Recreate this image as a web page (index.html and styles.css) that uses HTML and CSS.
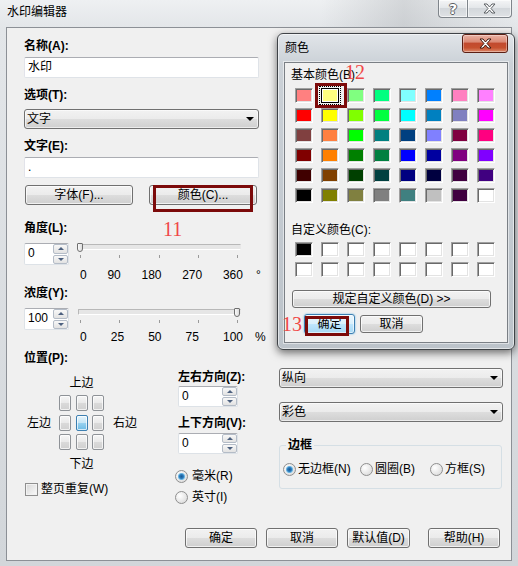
FILE: index.html
```html
<!DOCTYPE html>
<html lang="zh-CN">
<head>
<meta charset="utf-8">
<title>水印编辑器</title>
<link rel="stylesheet" href="styles.css">
</head>
<body>
<div class="window">
  <div class="titlebar">
    <span class="title">水印编辑器</span>
    <div class="caption">
      <span class="cap cap-help">?</span>
      <span class="cap cap-close"><svg width="13" height="11" viewBox="0 0 13 11"><path d="M1,1 h3 l2.5,3 l2.5,-3 h3 l-4,4.5 l4,4.5 h-3 l-2.5,-3 l-2.5,3 h-3 l4,-4.5 z" fill="#fff" stroke="#5b5f63" stroke-width="1" stroke-linejoin="round"/></svg></span>
    </div>
  </div>

  <div class="client">
    <div class="main">
      <div class="col-left">
        <div class="lbl">名称(A):</div>
        <div class="textbox tb-name">水印</div>
        <div class="lbl lbl-gap">选项(T):</div>
        <div class="combo combo-opt"><span>文字</span><span class="arrow"></span></div>
        <div class="lbl lbl-gap">文字(E):</div>
        <div class="textbox tb-text">.</div>
        <div class="btn-row">
          <div class="btn btn-font">字体(F)...</div>
          <div class="btn btn-color">颜色(C)...<span class="mark mark-color"></span></div>
        </div>

        <div class="lbl lbl-angle">角度(L):</div>
        <div class="slider-row">
          <div class="spin spin-s"><span class="spin-val">0</span><span class="spin-btns"><span class="sb"><i class="up"></i></span><span class="sb"><i class="down"></i></span></span></div>
          <div class="slider">
            <div class="track"><span class="thumb thumb-start"></span></div>
            <div class="ticks"><i></i><i></i><i></i><i></i><i></i></div>
            <div class="scale scale-a"><div class="nums"><span>0</span><span>90</span><span>180</span><span>270</span><span>360</span></div><span class="unit unit-deg">°</span></div>
          </div>
        </div>

        <div class="lbl lbl-dens">浓度(Y):</div>
        <div class="slider-row slider-row2">
          <div class="spin spin-s"><span class="spin-val">100</span><span class="spin-btns"><span class="sb"><i class="up"></i></span><span class="sb"><i class="down"></i></span></span></div>
          <div class="slider">
            <div class="track"><span class="thumb thumb-end"></span></div>
            <div class="ticks"><i></i><i></i><i></i><i></i><i></i></div>
            <div class="scale scale-b"><div class="nums"><span>0</span><span>25</span><span>50</span><span>75</span><span>100</span></div><span class="unit unit-pct">%</span></div>
          </div>
        </div>

        <div class="lbl lbl-pos">位置(P):</div>
        <div class="pos-row">
          <div class="pos-left">
            <div class="posgrid">
              <span class="pg-top">上边</span>
              <span class="pg-left">左边</span>
              <div class="cells">
                <span class="pc"></span><span class="pc"></span><span class="pc"></span>
                <span class="pc"></span><span class="pc on"></span><span class="pc"></span>
                <span class="pc"></span><span class="pc"></span><span class="pc"></span>
              </div>
              <span class="pg-right">右边</span>
              <span class="pg-bottom">下边</span>
            </div>
            <div class="check-row"><span class="chk"></span><span>整页重复(W)</span></div>
          </div>
          <div class="pos-right">
            <div class="lbl pr-l1">左右方向(Z):</div>
            <div class="spin spin-w pr-s1"><span class="spin-val">0</span><span class="spin-btns"><span class="sb"><i class="up"></i></span><span class="sb"><i class="down"></i></span></span></div>
            <div class="lbl pr-l2">上下方向(V):</div>
            <div class="spin spin-w pr-s2"><span class="spin-val">0</span><span class="spin-btns"><span class="sb"><i class="up"></i></span><span class="sb"><i class="down"></i></span></span></div>
            <div class="radio-row pr-r1"><span class="rad on"></span><span>毫米(R)</span></div>
            <div class="radio-row pr-r2"><span class="rad"></span><span>英寸(I)</span></div>
          </div>
        </div>
      </div>

      <div class="col-right">
        <div class="combo combo-dir"><span>纵向</span><span class="arrow"></span></div>
        <div class="combo combo-col"><span>彩色</span><span class="arrow"></span></div>
        <fieldset class="group">
          <legend>边框</legend>
          <div class="grp-row">
            <span class="grp-item gi1"><span class="rad on"></span><span>无边框(N)</span></span>
            <span class="grp-item gi2"><span class="rad"></span><span>圆圈(B)</span></span>
            <span class="grp-item gi3"><span class="rad"></span><span>方框(S)</span></span>
          </div>
        </fieldset>
      </div>
    </div>

    <div class="footer">
      <div class="btn">确定</div>
      <div class="btn">取消</div>
      <div class="btn btn-def">默认值(D)</div>
      <div class="btn btn-help">帮助(H)</div>
    </div>
  </div>

  <span class="anno anno-11">11</span>

  <div class="cdlg">
    <div class="cdlg-title">
      <span class="cdlg-name">颜色</span>
      <span class="cdlg-close"><svg width="13" height="11" viewBox="0 0 13 11"><path d="M1,1 h3 l2.5,3 l2.5,-3 h3 l-4,4.5 l4,4.5 h-3 l-2.5,-3 l-2.5,3 h-3 l4,-4.5 z" fill="#fff" stroke="#3d1810" stroke-width="1" stroke-linejoin="round"/></svg></span>
    </div>
    <div class="cdlg-panel">
      <div class="cl">基本颜色(B):</div>
      <div class="swatches">
        <span class="sw" style="background:#FF8080"></span><span class="sw sel" style="background:#FFFF80"></span><span class="sw" style="background:#80FF80"></span><span class="sw" style="background:#00FF80"></span><span class="sw" style="background:#80FFFF"></span><span class="sw" style="background:#0080FF"></span><span class="sw" style="background:#FF80C0"></span><span class="sw" style="background:#FF80FF"></span>
        <span class="sw" style="background:#FF0000"></span><span class="sw" style="background:#FFFF00"></span><span class="sw" style="background:#80FF00"></span><span class="sw" style="background:#00FF40"></span><span class="sw" style="background:#00FFFF"></span><span class="sw" style="background:#0080C0"></span><span class="sw" style="background:#8080C0"></span><span class="sw" style="background:#FF00FF"></span>
        <span class="sw" style="background:#804040"></span><span class="sw" style="background:#FF8040"></span><span class="sw" style="background:#00FF00"></span><span class="sw" style="background:#008080"></span><span class="sw" style="background:#004080"></span><span class="sw" style="background:#8080FF"></span><span class="sw" style="background:#800040"></span><span class="sw" style="background:#FF0080"></span>
        <span class="sw" style="background:#800000"></span><span class="sw" style="background:#FF8000"></span><span class="sw" style="background:#008000"></span><span class="sw" style="background:#008040"></span><span class="sw" style="background:#0000FF"></span><span class="sw" style="background:#0000A0"></span><span class="sw" style="background:#800080"></span><span class="sw" style="background:#8000FF"></span>
        <span class="sw" style="background:#400000"></span><span class="sw" style="background:#804000"></span><span class="sw" style="background:#004000"></span><span class="sw" style="background:#004040"></span><span class="sw" style="background:#000080"></span><span class="sw" style="background:#000040"></span><span class="sw" style="background:#400040"></span><span class="sw" style="background:#400080"></span>
        <span class="sw" style="background:#000000"></span><span class="sw" style="background:#808000"></span><span class="sw" style="background:#808040"></span><span class="sw" style="background:#808080"></span><span class="sw" style="background:#408080"></span><span class="sw" style="background:#C0C0C0"></span><span class="sw" style="background:#400040"></span><span class="sw" style="background:#FFFFFF"></span>
      </div>
      <div class="cl cl2">自定义颜色(C):</div>
      <div class="swatches custom">
        <span class="sw" style="background:#000000"></span><span class="sw"></span><span class="sw"></span><span class="sw"></span><span class="sw"></span><span class="sw"></span><span class="sw"></span><span class="sw"></span>
        <span class="sw"></span><span class="sw"></span><span class="sw"></span><span class="sw"></span><span class="sw"></span><span class="sw"></span><span class="sw"></span><span class="sw"></span>
      </div>
      <div class="btn btn-wide">规定自定义颜色(D) &gt;&gt;</div>
      <div class="cdlg-btns">
        <div class="btn btn-ok">确定</div>
        <div class="btn btn-cancel">取消</div>
      </div>
    </div>
    <span class="anno anno-12">12</span>
    <span class="mark mark-sw"></span>
    <span class="anno anno-13">13</span>
    <span class="mark mark-ok"></span>
  </div>
</div>
</body>
</html>
```

FILE: styles.css
```css
* { box-sizing: border-box; }
html, body { margin: 0; padding: 0; }
body {
  width: 518px; height: 566px; overflow: hidden;
  background: #d5d9dd;
  font-family: "Liberation Sans", "Noto Sans CJK SC", sans-serif;
  font-size: 12px; line-height: 16px; color: #000;
}

.window {
  position: relative; width: 518px; height: 566px;
  display: flex; flex-direction: column;
  background: linear-gradient(180deg, #eef0f2 0, #e3e6e9 27px, #d2d6da 100%);
}

/* title bar */
.titlebar {
  height: 27px; flex: none;
  display: flex; justify-content: space-between; align-items: flex-start;
  background: linear-gradient(90deg, rgba(0,0,0,0) 0, rgba(0,0,0,0) 62%, rgba(120,125,130,.22) 78%, rgba(120,125,130,.12) 86%, rgba(0,0,0,0) 100%);
}
.title { padding: 4px 0 0 7px; }
.caption { display: flex; margin-right: 6px; }
.cap {
  height: 18px; display: flex; align-items: center; justify-content: center;
  border: 1px solid #7f858b; border-top: 0;
  background: linear-gradient(180deg, #f4f5f6 0, #e4e7ea 45%, #d3d7db 50%, #dfe2e5 100%);
  box-shadow: inset 0 0 0 1px rgba(255,255,255,.6);
}
.cap-help {
  width: 29px; border-right: 0; border-radius: 0 0 0 4px;
  font: bold 14px/1 "DejaVu Sans", sans-serif; color: #fff;
  text-shadow: 1px 0 0 #5b5f63, -1px 0 0 #5b5f63, 0 1px 0 #5b5f63, 0 -1px 0 #5b5f63;
}
.cap-close { width: 45px; border-radius: 0 0 4px 0; }

/* client */
.client {
  flex: none; height: 534px; margin: 0 6px;
  border: 1px solid #8c9096; background: #f0f0f0;
  display: flex; flex-direction: column;
}
.main { flex: 1; display: flex; padding: 10px 0 0 17px; }
.col-left { width: 236px; flex: none; }
.col-right { width: 224px; flex: none; margin-left: 19px; }

.lbl { height: 16px; font-weight: bold; white-space: nowrap; }
.lbl-gap { margin-top: 9px; }

.textbox {
  width: 235px; height: 21px; background: #fff;
  border: 1px solid #dfe3e8; border-top-color: #abadb3; border-left-color: #e2e3ea;
  border-radius: 2px; padding: 0 3px; line-height: 19px;
}
.tb-name, .tb-text { margin-top: 3px; }

.combo {
  height: 20px; width: 235px;
  border: 1px solid #707070; border-radius: 3px;
  background: linear-gradient(180deg, #f2f2f2 0, #ebebeb 50%, #dddddd 51%, #cfcfcf 100%);
  box-shadow: inset 0 0 0 1px rgba(255,255,255,.6);
  display: flex; align-items: center; justify-content: space-between;
  padding: 0 4px 0 2px;
}
.arrow {
  width: 0; height: 0;
  border-left: 4px solid transparent; border-right: 4px solid transparent;
  border-top: 4px solid #000;
}
.combo-opt { margin-top: 6px; }

.btn {
  height: 20px; border: 1px solid #707070; border-radius: 3px;
  background: linear-gradient(180deg, #f2f2f2 0, #ebebeb 50%, #dddddd 51%, #cfcfcf 100%);
  box-shadow: inset 0 0 0 1px rgba(255,255,255,.7);
  display: flex; align-items: center; justify-content: center;
  white-space: nowrap;
}
.btn-row { display: flex; margin-top: 7px; }
.btn-font { width: 108px; margin-left: 1px; }
.btn-color { width: 108px; margin-left: 16px; position: relative; }

.mark { position: absolute; border: 3px solid #7c0a0a; }
.mark-color { left: 3px; top: -1px; width: 100px; height: 27px; }

.anno {
  position: absolute; font-family: "Liberation Serif", serif;
  font-size: 20px; line-height: 20px; color: #f04848;
}
.anno-11 { left: 163px; top: 219px; }

/* sliders */
.lbl-angle { margin-top: 15px; }
.slider-row { display: flex; margin-top: 7px; }
.spin {
  display: flex; height: 22px; background: #fff;
  border: 1px solid #dde2e7; border-top-color: #abadb3; border-radius: 2px;
}
.spin-s { width: 45px; flex: none; }
.spin-val { flex: 1; padding: 1px 0 0 3px; line-height: 16px; }
.spin-btns { width: 15px; flex: none; display: flex; flex-direction: column; gap: 1px; }
.sb {
  flex: 1; border: 1px solid #b4bcc7; border-radius: 2px;
  background: linear-gradient(180deg, #f8f8f8, #e2e2e2);
  display: flex; align-items: center; justify-content: center;
}
.up { width: 0; height: 0; border-left: 3px solid transparent; border-right: 3px solid transparent; border-bottom: 3px solid #4c607f; }
.down { width: 0; height: 0; border-left: 3px solid transparent; border-right: 3px solid transparent; border-top: 3px solid #4c607f; }

.slider { margin-left: 7px; width: 190px; }
.track { position: relative; height: 12px; }
.track::before {
  content: ""; position: absolute; left: 2px; top: 1px; width: 161px; height: 4px;
  border: 1px solid #b8b8b8; border-bottom-color: #fff; border-right-color: #e8e8e8;
  background: #e6e6e6; border-radius: 1px;
}
.thumb {
  position: absolute; top: 0; width: 6px; height: 9px;
  border: 1px solid #6f6f6f; border-radius: 1px 1px 3px 3px;
  background: linear-gradient(90deg, #fbfbfb, #dcdcdc);
}
.thumb-start { left: 1px; }
.thumb-end { left: 158px; }
.ticks { height: 4px; width: 162px; padding-left: 4px; display: flex; justify-content: space-between; }
.ticks i { width: 1px; height: 3px; background: #9a9a9a; }
.scale { display: flex; height: 16px; }
.scale-a { margin-top: 8px; }
.scale-b { margin-top: 5px; }
.nums { width: 163px; margin-left: 4px; display: flex; justify-content: space-between; }
.unit-deg { margin-left: 13px; }
.unit-pct { margin-left: 12px; }

.lbl-dens { margin-top: 2px; }
.slider-row2 { margin-top: 7px; }
.lbl-pos { margin-top: 5px; }

/* position */
.pos-row { display: flex; }
.pos-left { width: 151px; flex: none; padding-top: 9px; }
.posgrid { display: grid; grid-template-columns: 35px 45px auto; }
.pg-top { grid-column: 2; text-align: center; height: 16px; margin-bottom: 4px; }
.pg-left { grid-column: 1; align-self: center; padding-left: 3px; }
.cells {
  grid-column: 2; display: grid;
  grid-template-columns: repeat(3, 12px); grid-auto-rows: 16px;
  column-gap: 4.5px; row-gap: 3.5px;
}
.pg-right { grid-column: 3; align-self: center; padding-left: 9px; }
.pg-bottom { grid-column: 2; text-align: center; height: 16px; margin-top: 6px; }
.pc {
  border: 1px solid #8e9297; border-radius: 2px;
  background: linear-gradient(180deg, #f6f6f6 0, #e9e9e9 50%, #dadada 51%, #d0d0d0 100%);
  box-shadow: inset 0 0 0 1px rgba(255,255,255,.7);
}
.pc.on {
  border-color: #3c7fb1;
  background: linear-gradient(180deg, #e5f4fc 0, #c4e5f6 50%, #98d1ef 51%, #6bbbe6 100%);
}
.check-row { display: flex; align-items: center; height: 16px; margin-top: 9px; padding-left: 1px; gap: 3px; }
.chk {
  width: 13px; height: 13px; border: 1px solid #8f8f8f;
  background: linear-gradient(135deg, #d6d6d6, #fbfbfb);
  box-shadow: inset 0 0 0 1px #f2f2f2;
}

.pos-right { flex: none; width: 85px; }
.pr-l1 { margin-top: 3px; padding-left: 3px; }
.spin-w { width: 60px; height: 21px; margin-left: 3px; }
.pr-s1 { margin-top: 1px; }
.pr-l2 { margin-top: 8px; padding-left: 3px; }
.pr-s2 { margin-top: 2px; }
.radio-row { display: flex; align-items: center; height: 16px; gap: 4px; }
.pr-r1 { margin-top: 14px; }
.pr-r2 { margin-top: 5px; }
.rad {
  width: 13px; height: 13px; flex: none; border-radius: 50%;
  border: 1px solid #8f8f8f;
  background: radial-gradient(circle at 35% 35%, #ffffff, #d4d4d4);
}
.rad.on {
  background:
    radial-gradient(circle at 50% 50%, #1a5a93 0, #2b7abb 2px, #86c8ec 3.4px, rgba(255,255,255,0) 3.9px),
    radial-gradient(circle at 35% 35%, #ffffff, #d4d4d4);
}

/* right column */
.combo-dir { width: 224px; margin-top: 330px; }
.combo-col { width: 224px; margin-top: 14px; }
.group {
  margin: 15px 0 0 0; padding: 0; min-width: 0;
  width: 223px; height: 52px;
  border: 1px solid #d5dfe5; border-radius: 3px;
}
.group legend { margin-left: 6px; padding: 0 2px; font-weight: bold; line-height: 16px; }
.grp-row { display: flex; align-items: center; height: 16px; margin-top: 8px; padding-left: 3px; }
.grp-item { display: flex; align-items: center; gap: 2px; white-space: nowrap; }
.gi1 { width: 77px; }
.gi2 { width: 70px; }

/* footer */
.footer { flex: none; display: flex; justify-content: flex-end; padding: 0 11px 12px 0; }
.footer .btn { width: 72px; margin-left: 9px; }
.footer .btn-def { width: 63px; }
.footer .btn-help { margin-left: 18px; }

/* color dialog */
.cdlg {
  position: absolute; left: 277px; top: 33px; width: 238px; height: 317px;
  border: 1px solid #3f4347; border-radius: 6px;
  background: linear-gradient(180deg, #e1e5e9 0, #cbd1d7 30px, #bcc3ca 100%);
  box-shadow: 0 3px 8px rgba(0,0,0,.55), inset 0 0 0 1px rgba(255,255,255,.55);
  display: flex; flex-direction: column;
}
.cdlg-title { height: 28px; flex: none; display: flex; justify-content: space-between; align-items: flex-start; }
.cdlg-name { padding: 6px 0 0 7px; }
.cdlg-close {
  width: 46px; height: 19px; margin-right: 6px;
  border: 1px solid #5b1f14; border-radius: 3px;
  background: linear-gradient(180deg, #ebb3a5 0, #db8a76 40%, #c24a2e 50%, #c6502f 75%, #dc8a6c 100%);
  box-shadow: inset 0 0 0 1px rgba(255,255,255,.35);
  display: flex; align-items: center; justify-content: center;
}
.cdlg-panel {
  margin: 0 6px; height: 281px; flex: none;
  border: 1px solid #7a7f85; background: #f0f0f0;
  box-shadow: 0 0 0 1px rgba(255,255,255,.5);
}
.cl { margin: 4px 0 0 6px; height: 16px; white-space: nowrap; }
.cl2 { margin-top: 19px; }
.swatches {
  display: grid; grid-template-columns: repeat(8, 18px); grid-auto-rows: 15px;
  column-gap: 8px; row-gap: 5px; margin: 5px 0 0 10px;
}
.custom { margin-top: 4px; }
.sw {
  background: #fff;
  border: 1px solid; border-color: #a0a0a0 #ffffff #ffffff #a0a0a0;
  box-shadow: inset 1px 1px 0 #6a6a6a, inset -1px -1px 0 #e3e3e3;
}
.sw.sel {
  border: 1px solid #000;
  box-shadow: inset 0 0 0 1px #fff;
  outline: 1px dotted #000; outline-offset: 1px;
}
.btn-wide { width: 199px; height: 18px; margin: 13px 0 0 7px; }
.cdlg-btns { display: flex; align-items: flex-start; margin: 6px 0 0 19px; }
.btn-ok {
  width: 51px; height: 20px;
  border-color: #3c7fb1;
  background: linear-gradient(180deg, #eaf6fd 0, #d9f0fc 50%, #bee6fd 51%, #a7d9f5 100%);
  box-shadow: 0 0 2px #5fb3e6, inset 0 0 0 1px rgba(255,255,255,.6);
}
.btn-cancel { width: 63px; height: 18px; margin: 1px 0 0 5px; }
.anno-12 { left: 67px; top: 28px; }
.anno-13 { left: 4px; top: 280px; }
.mark-sw { left: 37px; top: 49px; width: 32px; height: 25px; }
.mark-ok { left: 27px; top: 282px; width: 44px; height: 20px; }
```
